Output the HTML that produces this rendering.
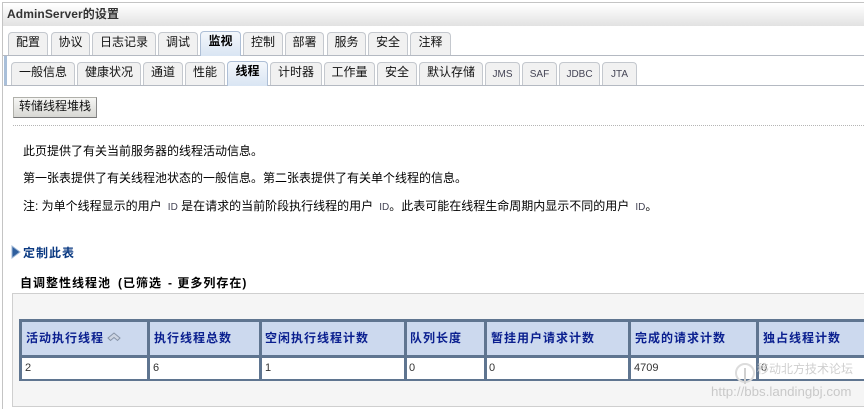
<!DOCTYPE html>
<html lang="zh">
<head>
<meta charset="utf-8">
<style>
html,body{margin:0;padding:0;background:#fff}
body{position:relative;width:864px;height:409px;overflow:hidden;font:12px/14px "Liberation Sans","WenQuanYi Zen Hei","Noto Sans CJK SC",sans-serif;color:#000}
div,span.a{position:absolute;box-sizing:border-box;white-space:nowrap}
.t{background:#f1f1f1;border:1px solid #c4c8ce;border-bottom:none;border-radius:4px 4px 0 0;text-align:center;color:#111;line-height:19px;padding-top:0}
.on{background:linear-gradient(#f4f7fb,#d9e5f3);border-color:#aebfd6;font-weight:bold;color:#000}
.l{font-size:10px;color:#445;line-height:23px}
.h{background:#5f7590;width:3px;top:319px;height:62px}
.th{top:331px;font-weight:bold;color:#0a1f8f;letter-spacing:1px}
.td{top:361px;color:#333;font-size:11px}
.p{left:23px;color:#000}
.b{font-weight:bold;color:#000;top:276px;letter-spacing:1px}
.id{font-size:10px;color:#445}
</style>
</head>
<body>
<div style="left:2px;top:2px;width:862px;height:407px;border-left:1px solid #c4c4c4;border-top:1px solid #c4c4c4"></div>
<div style="left:3px;top:4px;width:861px;height:22px;background:linear-gradient(#fff,#e2e2e2)"></div>
<div style="left:7px;top:7px;font-weight:bold;color:#333;line-height:14px;letter-spacing:.1px">AdminServer的设置</div>

<div style="left:3px;top:55px;width:861px;height:1px;background:#b4b9c2"></div>
<div class="t" style="left:8px;top:32px;width:40px;height:23px">配置</div>
<div class="t" style="left:51px;top:32px;width:39px;height:23px">协议</div>
<div class="t" style="left:92px;top:32px;width:64px;height:23px">日志记录</div>
<div class="t" style="left:158px;top:32px;width:40px;height:23px">调试</div>
<div class="t on" style="left:200px;top:31px;width:41px;height:25px">监视</div>
<div class="t" style="left:243px;top:32px;width:40px;height:23px">控制</div>
<div class="t" style="left:285px;top:32px;width:39px;height:23px">部署</div>
<div class="t" style="left:327px;top:32px;width:39px;height:23px">服务</div>
<div class="t" style="left:368px;top:32px;width:40px;height:23px">安全</div>
<div class="t" style="left:410px;top:32px;width:41px;height:23px">注释</div>

<div style="left:4px;top:56px;width:3px;height:30px;background:#a9bfd9"></div>
<div style="left:4px;top:85px;width:860px;height:1px;background:#b4b9c2"></div>
<div class="t" style="left:11px;top:62px;width:64px;height:23px">一般信息</div>
<div class="t" style="left:77px;top:62px;width:64px;height:23px">健康状况</div>
<div class="t" style="left:143px;top:62px;width:40px;height:23px">通道</div>
<div class="t" style="left:185px;top:62px;width:40px;height:23px">性能</div>
<div class="t on" style="left:227px;top:61px;width:41px;height:25px">线程</div>
<div class="t" style="left:270px;top:62px;width:52px;height:23px">计时器</div>
<div class="t" style="left:324px;top:62px;width:51px;height:23px">工作量</div>
<div class="t" style="left:377px;top:62px;width:40px;height:23px">安全</div>
<div class="t" style="left:419px;top:62px;width:64px;height:23px">默认存储</div>
<div class="t l" style="left:485px;top:62px;width:35px;height:23px">JMS</div>
<div class="t l" style="left:522px;top:62px;width:35px;height:23px">SAF</div>
<div class="t l" style="left:559px;top:62px;width:41px;height:23px">JDBC</div>
<div class="t l" style="left:602px;top:62px;width:35px;height:23px">JTA</div>

<div style="left:13px;top:97px;width:84px;height:21px;background:linear-gradient(#f6f6f4,#d8d8d4);border:1px solid #b0b0aa;border-right-color:#888;border-bottom-color:#777;text-align:center;line-height:17px;color:#111">转储线程堆栈</div>
<div style="left:13px;top:125px;width:851px;height:1px;border-top:1px dotted #b5b5b5"></div>

<div class="p" style="top:144px">此页提供了有关当前服务器的线程活动信息。</div>
<div class="p" style="top:171px">第一张表提供了有关线程池状态的一般信息。第二张表提供了有关单个线程的信息。</div>
<div class="p" style="top:199px">注: 为单个线程显示的用户 <span class="id">&nbsp;ID</span> 是在请求的当前阶段执行线程的用户 <span class="id">&nbsp;ID</span>。此表可能在线程生命周期内显示不同的用户 <span class="id">&nbsp;ID</span>。</div>

<svg style="position:absolute;left:11px;top:245px" width="10" height="14" viewBox="0 0 10 14"><path d="M1 1 L9 7 L1 13 Z" fill="#2f5f9e" stroke="#9db6d6" stroke-width="1"/></svg>
<div style="left:23px;top:246px;font-weight:bold;color:#0b3a82;letter-spacing:1px">定制此表</div>
<div class="b" style="left:20px">自调整性线程池</div>
<div class="b" style="left:118px">(已筛选</div>
<div class="b" style="left:168px">- 更多列存在)</div>

<div style="left:12px;top:293px;width:853px;height:114px;background:#f5f5f5;border:1px solid #cfcfcf"></div>
<div style="left:19px;top:319px;width:845px;height:62px;background:#5f7590"></div>
<div style="left:22px;top:322px;width:842px;height:33px;background:#ccd9ee"></div>
<div style="left:22px;top:358px;width:842px;height:21px;background:#fff"></div>
<div class="h" style="left:147px"></div>
<div class="h" style="left:259px"></div>
<div class="h" style="left:404px"></div>
<div class="h" style="left:484px"></div>
<div class="h" style="left:628px"></div>
<div class="h" style="left:756px"></div>

<div class="th" style="left:26px">活动执行线程</div>
<svg style="position:absolute;left:107px;top:332px" width="14" height="11" viewBox="0 0 14 11"><path d="M1 6 L7 1 L13 6 L10.500 8.500 L7 5.500 L3.500 8.500 Z" fill="#cdd5e2" stroke="#8794a8" stroke-width="1"/></svg>
<div class="th" style="left:154px">执行线程总数</div>
<div class="th" style="left:265px">空闲执行线程计数</div>
<div class="th" style="left:410px">队列长度</div>
<div class="th" style="left:491px">暂挂用户请求计数</div>
<div class="th" style="left:635px">完成的请求计数</div>
<div class="th" style="left:763px">独占线程计数</div>

<div class="td" style="left:25px">2</div>
<div class="td" style="left:153px">6</div>
<div class="td" style="left:265px">1</div>
<div class="td" style="left:409px">0</div>
<div class="td" style="left:489px">0</div>
<div class="td" style="left:634px">4709</div>
<div class="td" style="left:761px">0</div>

<svg style="position:absolute;left:734px;top:362px" width="22" height="24" viewBox="0 0 22 24"><circle cx="11" cy="11" r="9" fill="none" stroke="#dcdcdc" stroke-width="2"/><path d="M11 6 V22" stroke="#d0d0d0" stroke-width="2"/></svg>
<div style="left:757px;top:362px;color:#cfcfcf;font-size:12px">移动北方技术论坛</div>
<div style="left:711px;top:385px;color:#c9c9c9;font-size:13.300px">http://bbs.landingbj.com</div>
</body>
</html>
